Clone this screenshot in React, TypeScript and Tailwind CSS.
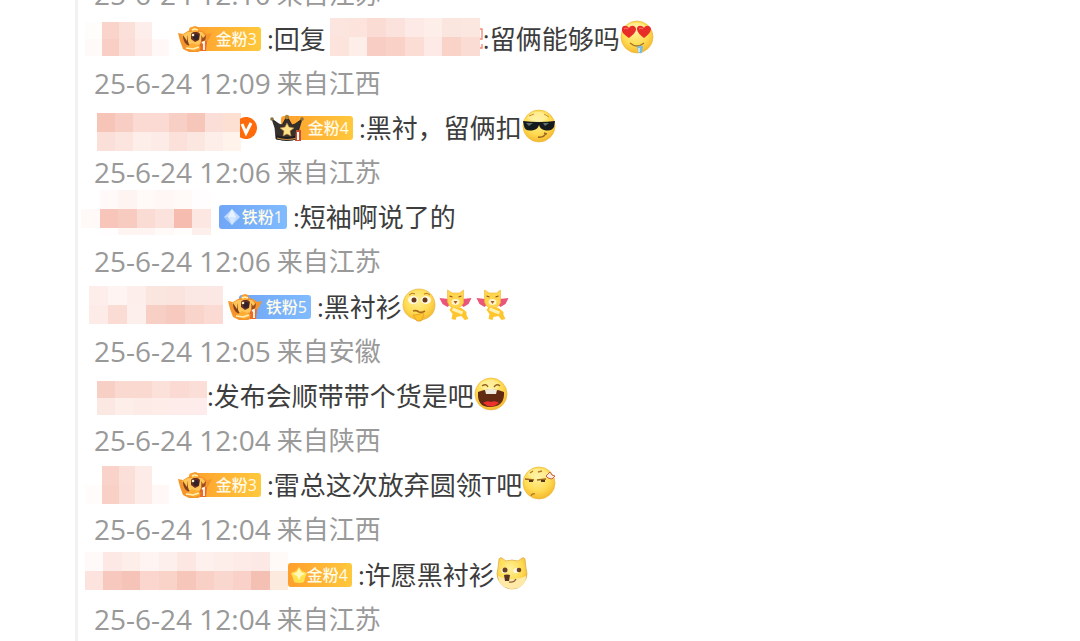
import React from 'react';

type EmojiName = 'love' | 'cool' | 'doubt' | 'cheer' | 'laugh' | 'smirk' | 'doge';
type BadgeName = 'gold-tiger' | 'gold-crown' | 'gold-star' | 'blue-gem' | 'blue-tiger';

interface Mosaic {
  className: string;
  rows: string[][];
}

interface Comment {
  id: number;
  name: Mosaic;
  verified?: boolean;
  badge?: BadgeName;
  badgeLabel?: string;
  replyTo?: Mosaic;
  text: string;
  emojis: EmojiName[];
  date: string;
  region: string;
}

const comments: Comment[] = [
  {
    id: 1,
    name: {
      className: 'ml-1 mr-2 h-[34px] w-[84px]',
      rows: [
        ['#fffdfc', '#fad4cb', '#fbe0da', '#fdeeeb', '#ffffff'],
        ['#fffafa', '#f9cfc5', '#fbded7', '#fdeae6', '#fff8f7'],
      ],
    },
    badge: 'gold-tiger',
    badgeLabel: '金粉3',
    replyTo: {
      className: 'ml-1 mb-1 h-[38px] w-[150px]',
      rows: [
        ['#fce5df', '#fce3dc', '#fadcd4', '#fbe2dc', '#fdeae6', '#fdeeea', '#fbe5df', '#fbe6e0'],
        ['#fce3dc', '#fdeeea', '#f8cec4', '#f9d1c7', '#fbddd5', '#fdeae7', '#f9d2c8', '#fbdcd4'],
      ],
    },
    text: '留俩能够吗',
    emojis: ['love'],
    date: '25-6-24 12:09',
    region: '江西',
  },
  {
    id: 2,
    name: {
      className: 'ml-4 mt-2 h-[38px] w-[144px]',
      rows: [
        ['#f7c4b8', '#f8cdc3', '#fadad2', '#fadad2', '#f8cfc5', '#f6c6ba', '#fbded7', '#fde0d2'],
        ['#fbe0da', '#fce5df', '#fdeeea', '#fdebe7', '#fce1da', '#fce6e0', '#fdeeea', '#fff3ec'],
      ],
    },
    verified: true,
    badge: 'gold-crown',
    badgeLabel: '金粉4',
    text: '黑衬，留俩扣',
    emojis: ['cool'],
    date: '25-6-24 12:06',
    region: '江苏',
  },
  {
    id: 3,
    name: {
      className: 'mr-2 mb-2 h-[45px] w-[130px]',
      rows: [
        ['#ffffff', '#fffaf9', '#fef4f2', '#fff9f8', '#fef7f5', '#fff9f8', '#fffdfd'],
        ['#fff9f8', '#f7c5ba', '#f8cbc1', '#fbdcd5', '#fce2dc', '#f6bcb0', '#fce7e2'],
        ['#ffffff', '#fffdfd', '#fef4f2', '#fef4f2', '#fff9f8', '#fffcfc', '#fdefec'],
      ],
    },
    badge: 'blue-gem',
    badgeLabel: '铁粉1',
    text: '短袖啊说了的',
    emojis: [],
    date: '25-6-24 12:06',
    region: '江苏',
  },
  {
    id: 4,
    name: {
      className: 'ml-2 mr-1 mb-1 h-[38px] w-[134px]',
      rows: [
        ['#fdeeeb', '#fef4f2', '#fdeeeb', '#fbe5df', '#fbe4de', '#fbe8e4', '#fbe8e5'],
        ['#fdebe7', '#fadcd4', '#fdefec', '#f8cfc5', '#f7cabf', '#f9d4cb', '#fadad3'],
      ],
    },
    badge: 'blue-tiger',
    badgeLabel: '铁粉5',
    text: '黑衬衫',
    emojis: ['doubt', 'cheer', 'cheer'],
    date: '25-6-24 12:05',
    region: '安徽',
  },
  {
    id: 5,
    name: {
      className: 'ml-4 mt-1 h-[34px] w-[110px]',
      rows: [
        ['#f7cfc5', '#fad9d1', '#fad9d1', '#fbe1da', '#fadad2', '#fbded7'],
        ['#fce8e3', '#fdeeea', '#fcebe6', '#fdece8', '#fdecea', '#fdeceb'],
      ],
    },
    text: '发布会顺带带个货是吧',
    emojis: ['laugh'],
    date: '25-6-24 12:04',
    region: '陕西',
  },
  {
    id: 6,
    name: {
      className: 'ml-1 mr-2 h-[38px] w-[84px]',
      rows: [
        ['#ffffff', '#f9d2c9', '#fbdfd9', '#fdebe8', '#ffffff'],
        ['#fffcfb', '#f8d0c6', '#fbded8', '#fdebe7', '#fff8f7'],
      ],
    },
    badge: 'gold-tiger',
    badgeLabel: '金粉3',
    text: '雷总这次放弃圆领T吧',
    emojis: ['smirk'],
    date: '25-6-24 12:04',
    region: '江西',
  },
  {
    id: 7,
    name: {
      className: 'ml-1 mb-2 h-[38px] w-[203px]',
      rows: [
        ['#fffaf9', '#fce8e4', '#fdeeea', '#fff4f2', '#fdefec', '#fce7e2', '#fdf0ed', '#fdeeea', '#fdebe7', '#fce8e4', '#fffaf7'],
        ['#fce3dd', '#f7c9be', '#f6c3b8', '#fad6ce', '#f9d2c8', '#f6c6bb', '#f8d0c6', '#f9d6ce', '#f9d1c8', '#f5c0b4', '#fdeade'],
      ],
    },
    badge: 'gold-star',
    badgeLabel: '金粉4',
    text: '许愿黑衬衫',
    emojis: ['doge'],
    date: '25-6-24 12:04',
    region: '江苏',
  },
];

const BlurredName: React.FC<{ mosaic: Mosaic }> = ({ mosaic }) => (
  <span className={`flex shrink-0 flex-col ${mosaic.className}`}>
    {mosaic.rows.map((row, i) => (
      <span key={i} className={i === 2 ? 'flex h-[7px] shrink-0' : 'flex flex-1'}>
        {row.map((color, j) => (
          <span key={j} className="flex-1" style={{ backgroundColor: color }} />
        ))}
      </span>
    ))}
  </span>
);

const TigerIcon = () => (
  <svg viewBox="0 0 36 28" className="h-7 w-9">
    <path d="M1 8l5 1 5-3 3-1 1-3 3-1 3 1 1 3 4 1 4 3 5-1-3 6-2 3-2 7-7 3H12l-6-3-3-8z" fill="#f5962d" />
    <path d="M5 10l5 8 6 3 8-2 5-7-4-5H11z" fill="#ffc75a" />
    <path d="M6 10c0 7 3 10 7 11-2-3-3-7-2-11-1 2-1 4-1 6z" fill="#85401c" />
    <path d="M29 10c0 5-2 9-6 11 1-4 2-7 1-11l2 3z" fill="#a14e1d" />
    <path d="M14 9c2-3 7-3 9 0l-1 6-4 2-4-3z" fill="#6a3020" />
    <circle cx="19" cy="12" r="3" fill="#33222c" />
    <circle cx="16" cy="10" r="1.3" fill="#fff0cf" />
    <path d="M14 4l3-2 4 2-2 3h-4zM10 22l5-4 6 2 2 4-6 2z" fill="#ffad35" />
    <path d="M9 23l7 1 6-2M15 5l3-1 3 1" stroke="#fff0b4" strokeWidth="1.4" fill="none" />
    <path d="M24 16h6l-1 10h-6z" fill="#ed6c25" />
    <path d="M25 18l2-1v8" stroke="#fff" strokeWidth="1.8" fill="none" />
  </svg>
);

const CrownIcon = () => (
  <svg viewBox="0 0 36 28" className="h-7 w-9">
    <path d="M3 5l7 5 3 1 5-9 5 9 3-1 7-5-3 10-1 10q-11 3-22 0L6 14z" fill="#35302d" stroke="#161514" strokeWidth=".7" />
    <path d="M7 21q11 4 22 0v4q-11 3-22 0z" fill="#1f1d1c" />
    <path d="M8 24q10 3 20 0" stroke="#bd8948" strokeWidth="1.2" fill="none" />
    <path d="M18 9l2 4 5 1-4 3 1 5-4-2-4 2 1-5-4-3 5-1z" fill="#ffe28a" stroke="#b9853b" strokeWidth=".6" />
    <circle cx="3" cy="5" r="1.8" fill="#8b713c" />
    <circle cx="18" cy="3" r="2.2" fill="#a98438" />
    <circle cx="33" cy="5" r="1.8" fill="#8b713c" />
    <path d="M27 16h5v11h-6z" fill="#c34f35" />
    <path d="M29 18v8" stroke="#fff" strokeWidth="2" />
  </svg>
);

const GemIcon = () => (
  <svg viewBox="0 0 18 18" className="h-[18px] w-[18px]">
    <path d="M9 1l8 8-8 8-8-8z" fill="#c2dcff" />
    <path d="M9 1l4 8H5z" fill="#e9f3ff" />
    <path d="M1 9h8v8z" fill="#a4cbff" />
    <path d="M5 9h8l-4 8z" fill="#d6e8ff" />
  </svg>
);

const StarIcon = () => (
  <svg viewBox="0 0 18 18" className="h-[18px] w-[18px]">
    <path d="M9 1l3 4 5 2-2 5-1 4q-5 2-10 0l-1-4-2-5 5-2z" fill="#ffe04f" />
    <path d="M9 2l2 4 4 2-4 2-2 4-2-4-4-2 4-2z" fill="#fff9b7" />
  </svg>
);

const FanBadge: React.FC<{ type: BadgeName; label: string }> = ({ type, label }) => {
  const color = type.startsWith('gold')
    ? 'bg-linear-to-r from-[#ff9f2d] to-[#ffc83c]'
    : 'bg-linear-to-r from-[#70a6f6] to-[#80bbff]';
  const large = type === 'gold-tiger' || type === 'gold-crown' || type === 'blue-tiger';

  return (
    <span className={`relative flex h-6 shrink-0 items-center justify-end rounded-[3px] pr-1 ${color} ${large ? 'ml-3 w-[72px]' : type === 'blue-gem' ? 'w-[68px]' : 'w-[64px]'}`}>
      <span className={`absolute top-1/2 -translate-y-1/2 ${large ? '-left-3' : type === 'blue-gem' ? 'left-1' : 'left-0.5'}`}>
        {type.endsWith('tiger') && <TigerIcon />}
        {type === 'gold-crown' && <CrownIcon />}
        {type === 'blue-gem' && <GemIcon />}
        {type === 'gold-star' && <StarIcon />}
      </span>
      <span className="relative text-[16px] leading-6 font-medium text-[#fffbe9]">{label}</span>
    </span>
  );
};

const VerifiedIcon = () => (
  <svg viewBox="0 0 22 22" className="-ml-1.5 mr-3 h-[22px] w-[22px] shrink-0">
    {/* left side is hidden behind the name */}
    <path d="M5 1.8A11 11 0 1 1 5 20.2z" fill="#ff6a0a" />
    <path d="M7 7l4 9 5-10" stroke="#fff" strokeWidth="3" fill="none" />
  </svg>
);

const Face = () => (
  <>
    <circle cx="17" cy="17" r="16" fill="url(#face)" stroke="#edb83b" strokeWidth=".7" />
    <ellipse cx="16" cy="8" rx="10" ry="5" fill="#fff8bd" opacity=".45" />
  </>
);

const Emoji: React.FC<{ name: EmojiName }> = ({ name }) => (
  <svg viewBox="0 0 34 34" className={`mb-1 h-[34px] shrink-0 ${name === 'cheer' ? 'ml-0.5 w-[35px]' : 'w-[34px]'}`}>
    {name !== 'cheer' && name !== 'doge' && name !== 'doubt' && <Face />}
    {name === 'love' && (
      <>
        <path d="M9 18C4 15 1 11 2 9c0-4 5-4 7-1 2-4 7-2 7 1 0 4-4 6-7 9zM24 18c-4-3-7-6-7-9 0-4 5-4 7-1 2-4 7-2 7 1s-3 6-7 9z" fill="#e82c28" />
        <path d="M4 9q2-2 4 0M19 9q2-2 4 0" stroke="#ff7b6d" fill="none" />
        <path d="M10 23q7 6 14 0" stroke="#a57526" strokeWidth="1.3" fill="none" />
        <path d="M17 27q3-2 6-1l-1 7q-4 1-4-2z" fill="#7bbde4" />
        <path d="M19 28v4" stroke="#d8f2ff" strokeWidth="1.5" />
      </>
    )}
    {name === 'cool' && (
      <>
        <path d="M1 12q16 2 32 0l-1 6q-3 5-10 3-4-1-5-5-1 4-5 5-9 2-10-4z" fill="#151a1c" />
        <path d="M4 14h7l-4 3zM21 14h6l-4 3z" fill="#61706f" />
        <path d="M16 28q6 1 8-4M22 24l3 1" stroke="#9c6720" strokeWidth="1.5" fill="none" />
        <path d="M7 7l5-2M22 5l5 3" stroke="#c78c2b" fill="none" />
      </>
    )}
    {name === 'doubt' && (
      <>
        <path d="M17 1C8 1 1 8 1 17c0 7 5 12 11 14l5 2 6-2c6-2 10-7 10-14C33 8 26 1 17 1z" fill="url(#face)" stroke="#e6b342" strokeWidth=".7" />
        <ellipse cx="11" cy="12" rx="5" ry="4" fill="#fff9e4" />
        <ellipse cx="24" cy="12" rx="5" ry="4" fill="#fff9e4" />
        <circle cx="12" cy="12" r="2.5" fill="#65381e" />
        <circle cx="23" cy="12" r="2.5" fill="#65381e" />
        <path d="M7 7q3-3 6-1M22 6q3-2 6 1" stroke="#b47825" fill="none" />
        <path d="M11 23q3-1 6 1 3 1 6-1" stroke="#a96b22" strokeWidth="1.8" fill="none" />
        <path d="M11 27q5 0 10-2l1 2-3 6h-4z" fill="#ffc52d" stroke="#d98e20" strokeWidth=".6" />
      </>
    )}
    {name === 'cheer' && (
      <>
        <path d="M1 10l9 1 2 5-3 3-5-3zM33 10l-9 1-2 5 3 3 5-3z" fill="#e9567a" />
        <path d="M9 2l5 3h7l4-3v13l-3 4-5 2-6-3-2-4z" fill="#ffd44e" stroke="#eeb934" strokeWidth=".6" />
        <path d="M11 8l3 1M20 9l3-1" stroke="#8b571e" strokeWidth="1.3" />
        <ellipse cx="17" cy="14" rx="4" ry="3" fill="#fff5cd" />
        <path d="M15 13h4l-2 3z" fill="#a35c23" />
        <path d="M13 19l10 1 5 4v3l2 4-4 1-3-4-5 1-1 3-4-1 1-5-3-4z" fill="#ffc52e" />
        <path d="M14 21l10 4" stroke="#fff1b1" strokeWidth="3" />
      </>
    )}
    {name === 'laugh' && (
      <>
        <path d="M4 15q7-3 13-2 6-1 13 2 1 14-13 15T4 15z" fill="#622a12" />
        <path d="M11 13q6-2 12 0l-1 4H12z" fill="#eee9dd" />
        <path d="M9 26q4-3 8-1 4-2 8 1-8 7-16 0z" fill="#ed332e" />
        <path d="M8 9q4-3 6 1M20 10q3-4 6-1" stroke="#99651e" strokeWidth="1.4" fill="none" />
      </>
    )}
    {name === 'smirk' && (
      <>
        <path d="M3 13l9 1M15 14l9-1" stroke="#9b6420" strokeWidth="1.3" />
        <path d="M7 15h4M19 15h4" stroke="#54361d" strokeWidth="1.8" />
        <path d="M8 7l3-2M16 6l4-1M9 30q1-3 4-2" stroke="#b77a24" strokeWidth="1.3" fill="none" />
        <path d="M25 9l3-3 2 3 3 1-3 3-4-1-2-2z" fill="#fbece1" stroke="#c96247" />
      </>
    )}
    {name === 'doge' && (
      <>
        <path d="M4 3q1-2 3-1l4 3q6-2 12 0l4-3q2-1 3 1l1 9q2 6 0 11-5 10-14 10T3 23q-2-5 0-11z" fill="url(#face)" stroke="#d9a847" strokeWidth=".7" />
        <path d="M3 20q6 3 14 3t14-3q0 12-14 13Q4 32 3 20z" fill="#ffe9a6" />
        <path d="M6 14q3-4 7 0l-2 3H7zM18 14q4-4 7 0l-2 3h-4z" fill="#fff6e1" />
        <circle cx="10" cy="14" r="2.5" fill="#684027" />
        <circle cx="24" cy="14" r="2.3" fill="#684027" />
        <path d="M9 19q3-1 6 0l-1 6h-4z" fill="#573325" />
        <path d="M14 26q5 1 7-3" stroke="#956234" strokeWidth="1.3" fill="none" />
      </>
    )}
  </svg>
);

const CommentMeta: React.FC<{ date: string; region: string }> = ({ date, region }) => (
  <div className="flex h-11 items-center gap-1.5 pl-4 text-[#999]">
    <time className="text-[28px]">{date}</time>
    <span>来自{region}</span>
  </div>
);

const CommentItem: React.FC<{ comment: Comment }> = ({ comment }) => (
  <li className="nth-[3n]:pb-px">
    <div className="flex h-[45px] items-center pl-[3px] text-[#3d3d3d]">
      <BlurredName mosaic={comment.name} />
      {comment.verified && <VerifiedIcon />}
      {comment.badge && <FanBadge type={comment.badge} label={comment.badgeLabel ?? ''} />}
      <span className={comment.badge ? 'ml-1.5' : ''}>:{comment.replyTo && '回复'}</span>
      {comment.replyTo && (
        <>
          <BlurredName mosaic={comment.replyTo} />
          <svg viewBox="0 0 3 22" className="h-[22px] w-[3px] shrink-0">
            <path d="M0 1h2v10H0M0 20h2v-4" stroke="#f58b77" strokeWidth="1.4" fill="none" />
          </svg>
          <span>:</span>
        </>
      )}
      <span>{comment.text}</span>
      {comment.emojis.map((name, i) => (
        <Emoji key={i} name={name} />
      ))}
    </div>
    <CommentMeta date={comment.date} region={comment.region} />
  </li>
);

export default function App() {
  return (
    <main className="min-h-screen overflow-hidden bg-white pl-[75px] font-['Open_Sans','Noto_Sans_CJK_SC',sans-serif] text-[26px] leading-11 whitespace-nowrap">
      <svg className="absolute h-0 w-0" aria-hidden="true">
        <radialGradient id="face" cx="45%" cy="35%" r="65%">
          <stop offset="0" stopColor="#fff09a" />
          <stop offset=".6" stopColor="#ffdc54" />
          <stop offset="1" stopColor="#f5b92f" />
        </radialGradient>
      </svg>
      <section className="-mt-7 border-l-3 border-[#f2f2f2]">
        <CommentMeta date="25-6-24 12:10" region="江苏" />
        <ul className="-mb-2">
          {comments.map((comment) => (
            <CommentItem key={comment.id} comment={comment} />
          ))}
        </ul>
      </section>
    </main>
  );
}
